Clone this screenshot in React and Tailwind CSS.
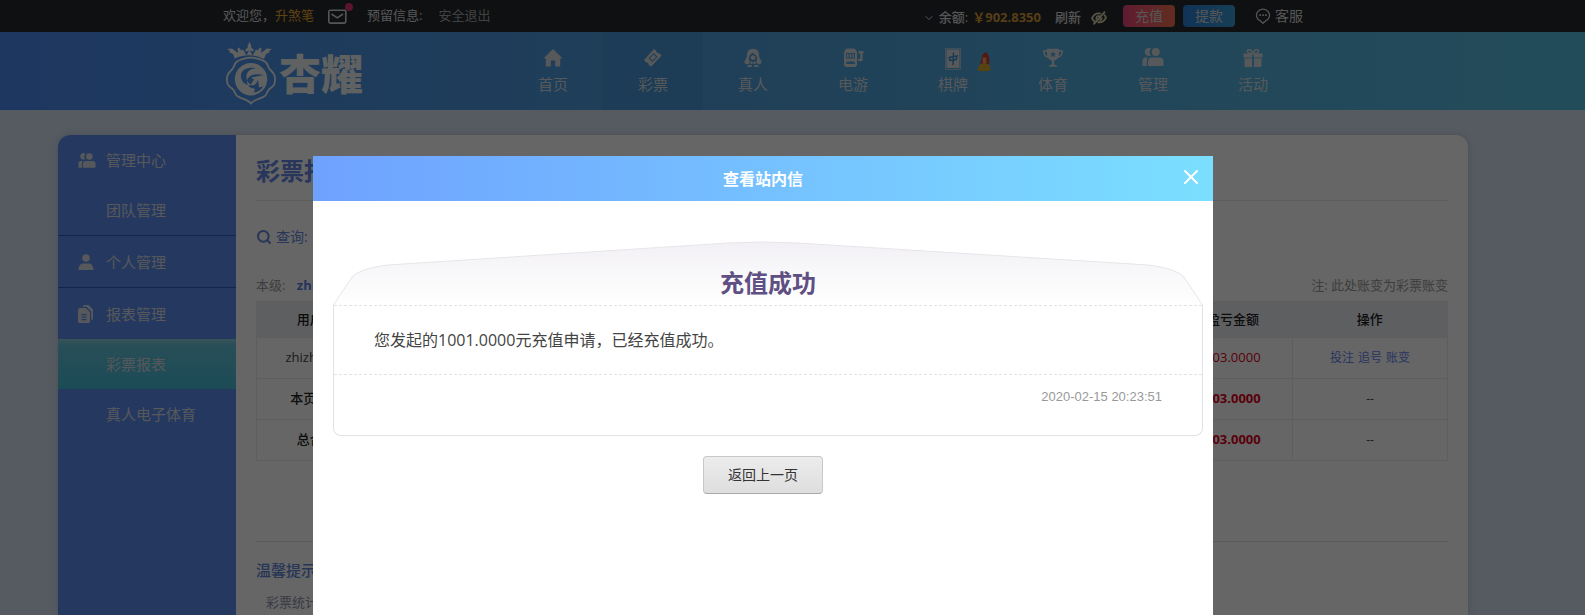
import React, { useState } from "react";
import { ChevronDown, Search, X } from "lucide-react";

const HomeIcon = () => (
  <svg viewBox="0 0 20 20" className="h-5 w-5" fill="currentColor">
    <path d="M10 1 .4 10.400h2.400V18.500h5v-6h4.400v6h5v-8.100h2.400z" />
  </svg>
);

const TicketIcon = () => (
  <svg viewBox="0 0 20 20" className="h-5 w-5" fill="currentColor">
    <path
      fillRule="evenodd"
      d="m11 1 2.500 2c-.5 1.200.8 2.400 2 1.700L18.600 7.500 8 18.800l-2.600-2.200c.6-1.300-.8-2.500-2-1.900L1 12zM10.600 5l-5 5.400 3.900 3.700 5-5.400z"
    />
    <path d="m10.500 6.500 2.600 2.400-3.700 3.700L7 10.200z" />
  </svg>
);

const DealerIcon = () => (
  <svg viewBox="0 0 20 20" className="h-5 w-5" fill="currentColor">
    <path
      fillRule="evenodd"
      d="M10 .8C6 .8 4 3.600 4 7c0 2.600-1.200 4.200-2.400 6-.5 1 .2 2.700 1.700 3.200 1.500.3 3-.4 3.400-1.700C7 13.400 5.800 12 5.900 9.500 6 7 8 6.500 9.500 4.500c1 2 4.500 2.500 4.600 5 .1 2.500-1.100 3.900-.8 5 .4 1.300 1.900 2 3.400 1.700 1.500-.5 2.200-2.200 1.700-3.200C17.200 11.200 16 9.600 16 7c0-3.400-2-6.200-6-6.200z"
    />
    <path d="M7.500 8.500C8.800 8.200 9.400 7.600 10 7c.6.6 1.200 1.200 2.500 1.500 0 2-1 3.500-2.500 3.500s-2.500-1.500-2.500-3.500zM7.500 13 10 14.500l2.500-1.500v3.500L10 15.300l-2.500 1.200zM4.500 17.300l4-.3.700 2H4.200zM15.500 17.300l-4-.3-.7 2h5z" />
  </svg>
);

const SlotIcon = () => (
  <svg viewBox="0 0 22 20" className="h-5 w-[22px]" fill="currentColor">
    <path
      fillRule="evenodd"
      d="M3.500 1.500 5 .5h7l1.500 1L15 4v13l-1.500 2h-10L2 17V4zM4 5v5.500h9V5zm1 8.500-1.200 2.500h9.400L12 13.500z"
    />
    <path d="M5 6h1.500v3.500H5zM7.700 6h1.600v3.500H7.700zM10.500 6H12v3.500h-1.500zM16 11h2.300V5.500h-1.800V3H21.500v2.500h-1V13H16z" />
  </svg>
);

const TrophyIcon = () => (
  <svg viewBox="0 0 20 20" className="h-5 w-5" fill="currentColor">
    <path
      fillRule="evenodd"
      d="M4 .8h12v1.500h4c0 4-1.500 7-5 7.500-1 1.600-2.300 2.600-4 3V16.500c1.500.2 3 .8 3.300 2.200H5.700C6 17.300 7.500 16.700 9 16.500v-3.700c-1.700-.4-3-1.400-4-3-3.500-.5-5-3.500-5-7.500h4zM1.600 3.800c.2 2 .9 3.700 2.600 4.300L4 3.800zM16 3.800l-.2 4.300c1.700-.6 2.400-2.300 2.600-4.300zM10 3.300l-.9 1.900-2.100.3 1.500 1.400-.4 2.100 1.900-1 1.900 1-.4-2.100L13 5.500l-2.100-.3z"
    />
  </svg>
);

const TeamIcon = ({ className }) => (
  <svg viewBox="0 0 22 18" className={className} fill="currentColor">
    <path d="M7.500 0a4 4 0 0 1 1.600.4 5.500 5.500 0 0 0-.3 7A4 4 0 1 1 7.500 0z" />
    <circle cx="13.800" cy="4" r="4" />
    <path d="M3.500 9.500h2.300A6 6 0 0 0 4.800 13v5H.5v-5a3.300 3.300 0 0 1 3-3.500z" />
    <path d="M10 9.500h7.500a4 4 0 0 1 4 4V17a1 1 0 0 1-1 1H7a1 1 0 0 1-1-1v-3.500a4 4 0 0 1 4-4z" />
  </svg>
);

const GiftIcon = () => (
  <svg viewBox="0 0 20 20" className="h-5 w-5" fill="currentColor">
    <path d="M.5 5.500h8.500v4H.5zM11 5.500h8.500v4H11zM1.500 10.300H9V19H1.500zM11 10.300h7.500V19H11z" />
    <path
      fill="none"
      stroke="currentColor"
      strokeWidth="1.500"
      d="M9.500 5.500C8 5.500 4.500 5 4.500 3.200c0-2.500 4.300-2.200 5.500 2.300 1.200-4.500 5.500-4.800 5.500-2.300C15.500 5 12 5.500 10.500 5.500"
    />
  </svg>
);

const TileIcon = () => (
  <svg viewBox="0 0 16 22" className="h-[22px] w-4" fill="none" stroke="currentColor">
    <rect x="0.500" y="0.500" width="15" height="21" strokeWidth="0.600" />
    <rect x="1.500" y="1.500" width="13" height="18.500" fill="currentColor" stroke="none" />
    <path stroke="#3f8fd0" strokeWidth="1.500" d="M4.200 9.500 12 8l-.8 3.500-6.400 1zM8.500 4.500 8 17" />
  </svg>
);

const PersonIcon = () => (
  <svg viewBox="0 0 16 16" className="h-4 w-4" fill="currentColor">
    <circle cx="8" cy="4" r="3.800" />
    <path d="M.5 16c0-4.500 2.500-6.500 4.500-6.500h6c2 0 4.500 2 4.500 6.500z" />
  </svg>
);

const ReportIcon = () => (
  <svg viewBox="0 0 16 18" className="h-[18px] w-4" fill="currentColor">
    <path
      fillRule="evenodd"
      d="M2 3h5.500L12 7v9.500a1.500 1.500 0 0 1-1.500 1.500h-9A1.500 1.500 0 0 1 0 16.500V5a2 2 0 0 1 2-2zm1.500 6v1.200h5V9zm0 2.500v1.200h5v-1.200zm0 2.500v1.200h5V14z"
    />
    <path d="M4.500 1.800C5 .6 5.600 0 7 0h3.500L15 4.500V13c0 1.200-.6 1.900-1.800 2.200V6.500L8.500 1.800z" />
  </svg>
);

const MailIcon = () => (
  <svg viewBox="0 0 19 15" className="h-[15px] w-[19px]" fill="none" stroke="currentColor" strokeWidth="1.600">
    <rect x="0.800" y="1.300" width="17" height="12.800" rx="1.500" />
    <path d="m3.500 5 5.800 3.800L15 5" />
  </svg>
);

const HideIcon = () => (
  <svg viewBox="0 0 16 14" className="h-3.5 w-4" fill="none" stroke="currentColor" strokeWidth="1.800">
    <path d="M10 2.600C5.500 1.600 2.500 4 1 7.200c.6 1.500 1.600 2.700 2.800 3.400M13 3.800c1 .8 1.700 1.800 2 2.900-1.500 3.300-4.500 5.200-8.500 4.300M5.500 8.500c-.6-2 .8-3.600 3-3.600M14 .6 2.500 13.400M10.600 6.500c.2 1.500-.7 2.500-2.200 2.700" />
  </svg>
);

const ChatIcon = () => (
  <svg viewBox="0 0 16 16" className="h-4 w-4" fill="none" stroke="currentColor" strokeWidth="1.300">
    <path d="M5.800 13.200a6.500 6.200 0 1 1 4.400 0L8 15.200z" />
    <path strokeWidth="1.800" d="M4.300 7.200h1.600M7.200 7.200h1.600M10.100 7.200h1.600" />
  </svg>
);

const Emblem = () => (
  <svg viewBox="0 0 52 66" className="h-[66px] w-[52px]" fill="currentColor">
    <path d="M10 20 8 15l-4-2 1-1-3-2 5-.5 6 4.500-.5-4.500 2-1 1.500 3 2-1 3.500 6 2.500-5-3 1c-1.500-1.500 0-3.500 2-3.500-1.500-2 .5-3 1.500-6.500 1 3.500 3 4.500 1.500 6.500 2 0 3.500 2 2 3.500l-3-1 2.500 5 3.500-6 2 1 1.500-3 2 1-.5 4.500 6-4.500 5 .5-3 2 1 1-4 2-2 5c-9-5-21-5-30 0z" />
    <path
      fill="none"
      stroke="currentColor"
      strokeWidth="1.800"
      d="M26 64.500c-4-5-9-4-13-7-4-2-2-5-6-8-5-3-5-6-5-9s0-5 4-9c4-3 2-6 6-9 9-5 19-5 28 0 4 3 2 6 6 9 4 4 4 6 4 9s0 6-5 9c-4 3-2 6-6 8-4 3-9 2-13 7z"
    />
    <path
      fillRule="evenodd"
      d="M26 24a16.200 16.200 0 1 0 .1 32.400A16.200 16.200 0 0 0 26 24zm9 5.500c-7-1-11 1-13 5-2 6 1 10 6 12-8 1-13-5-12-11 1-5 7-8 19-6zm4 6.500-13 2.500 3 2-4 6c5 1 7-3 8-6l1 8 4-1c-2 4-6 6-10 6 3-3 2-4-1-4.500-4-1-6-5-4.500-9 2-4 8-6 16.500-4z"
    />
  </svg>
);

const navItems = [
  { label: "首页", icon: <HomeIcon /> },
  { label: "彩票", icon: <TicketIcon />, active: true },
  { label: "真人", icon: <DealerIcon /> },
  { label: "电游", icon: <SlotIcon /> },
  { label: "棋牌", icon: <TileIcon />, hot: true },
  { label: "体育", icon: <TrophyIcon /> },
  { label: "管理", icon: <TeamIcon className="h-[18px] w-[22px]" /> },
  { label: "活动", icon: <GiftIcon /> },
];

const menuGroups = [
  { label: "管理中心", icon: <TeamIcon className="h-[15px] w-[18px]" />, children: ["团队管理"] },
  { label: "个人管理", icon: <PersonIcon />, children: [] },
  { label: "报表管理", icon: <ReportIcon />, children: ["彩票报表", "真人电子体育"] },
];

const rows = [
  { name: "zhizhong8", profit: "903.0000", links: ["投注", "追号", "账变"] },
  { name: "本页合计", profit: "903.0000", total: true },
  { name: "总合计", profit: "903.0000", total: true },
];

const TopBar = () => (
  <div className="h-8 bg-[#26282f] pr-[59px] text-[13px] text-[#d8d8d8]">
    <div className="mx-auto flex h-full max-w-[1080px] items-center justify-between">
      <div className="flex items-center">
        <span>欢迎您，</span>
        <span className="text-[#e8aa30]">升煞笔</span>
        <a href="#mail" aria-label="站内信" className="relative ml-3.5">
          <MailIcon />
          <i className="absolute -top-1.5 -right-1.5 h-2 w-2 rounded-full bg-[#e0356f]"></i>
        </a>
        <span className="ml-5">预留信息:</span>
        <a href="#logout" className="ml-4 text-[#a5a5a5]">安全退出</a>
      </div>
      <div className="flex items-center">
        <div className="flex items-center pt-1">
          <ChevronDown className="mr-1 h-3 w-3" />
          <span className="font-medium">余额:</span>
          <span className="ml-1 font-bold text-[#d89c38]">￥902.8350</span>
          <button className="ml-3.5 font-medium">刷新</button>
          <button aria-label="隐藏余额" className="ml-2.5 text-[#d8d2a8]">
            <HideIcon />
          </button>
        </div>
        <button className="ml-4 h-[22px] w-[52px] rounded bg-linear-to-r from-[#f04478] to-[#f07050] text-sm leading-5">
          充值
        </button>
        <button className="ml-2 h-[22px] w-[52px] rounded bg-linear-to-r from-[#2b7fd8] to-[#3a9cd8] text-sm leading-5">
          提款
        </button>
        <a href="#service" className="ml-5 flex items-center gap-1 text-sm">
          <ChatIcon />
          客服
        </a>
      </div>
    </div>
  </div>
);

const NavBar = () => (
  <header className="h-[78px] bg-linear-to-r from-[#4b8af0] via-[#4fa0dc] via-45% to-[#59bfe2] pr-[59px]">
    <div className="mx-auto flex h-full max-w-[1080px] justify-between">
      <a href="#home" className="flex items-center gap-0.5 pt-0.5 pl-0.5 text-[#f0f4f4]">
        <Emblem />
        <span className="pt-1 text-[42px] leading-none font-black">杏耀</span>
      </a>
      <nav className="flex">
        {navItems.map((item) => (
          <a
            key={item.label}
            href="#nav"
            className={`flex w-25 flex-col items-center pt-4 text-[15px] leading-6 text-[#d8dde2] ${
              item.active ? "bg-[#2a5fb0]/10" : ""
            }`}
          >
            <span className="relative flex h-6 items-start justify-center">
              {item.icon}
              {item.hot && (
                <svg viewBox="0 0 16 22" className="absolute top-1 left-8 h-5 w-[15px]">
                  <path fill="#d03c28" d="M9 0c4 2 5 8 4 15H4C3 9 5 9 5 6c0-3 2-3 4-6z" />
                  <path fill="#e0a070" d="M6 6h4v7H6z" />
                  <path fill="#d8a830" d="M4 13h8c2 2 3 4 2 8H1c-1-4 1-6 3-8z" />
                </svg>
              )}
            </span>
            {item.label}
          </a>
        ))}
      </nav>
    </div>
  </header>
);

const SideMenu = () => (
  <aside className="w-[178px] shrink-0 rounded-tl-xl bg-[#5c8eef] text-[15px] text-[#d8dce4]">
    {menuGroups.map((group, index) => (
      <div key={group.label} className={index > 0 ? "border-t border-[#3560b8] pt-px" : ""}>
        <a href="#group" className="flex h-[50px] items-center pl-5">
          <span className="flex w-7 items-center">{group.icon}</span>
          {group.label}
        </a>
        {group.children.map((child) => (
          <a
            key={child}
            href="#report"
            className={`flex h-[50px] items-center pl-12 ${
              child === "彩票报表"
                ? "bg-linear-to-b from-[#66c4dc] to-[#46bcd8] shadow-[inset_0_6px_6px_-4px_#a0d0e0]"
                : ""
            }`}
          >
            {child}
          </a>
        ))}
      </div>
    ))}
  </aside>
);

const Report = () => (
  <section className="min-w-0 flex-1 px-5 text-[13px]">
    <h1 className="h-[66px] border-b border-[#e6e6e6] pt-4 text-2xl leading-10 font-bold text-[#6487e6]">
      彩票报表
    </h1>
    <div className="flex items-center gap-1 pt-6 text-sm leading-6 text-[#6487dc]">
      <Search className="h-4 w-4" strokeWidth={3} />
      查询:
    </div>
    <div className="flex justify-between pt-6 leading-6 text-[#9a9a9a]">
      <span>
        本级: <a href="#self" className="ml-2 font-bold text-[#5b7fe8]">zhizhong8</a>
      </span>
      <span>注: 此处账变为彩票账变</span>
    </div>
    <table className="mt-1 w-full table-fixed border-collapse border border-[#ebebeb] text-center">
      <thead>
        <tr className="h-9 bg-[#ebedf3] text-[#222]">
          <th className="w-[10%] font-medium">用户名</th>
          <th></th>
          <th></th>
          <th></th>
          <th></th>
          <th className="w-[10%] font-medium">盈亏金额</th>
          <th className="w-[13%] font-medium">操作</th>
        </tr>
      </thead>
      <tbody>
        {rows.map((row) => (
          <tr
            key={row.name}
            className={`h-[41px] border border-[#ebebeb] text-[#444] ${row.total ? "font-bold" : ""}`}
          >
            <td className={row.total ? "font-medium text-[#222]" : ""}>{row.name}</td>
            <td></td>
            <td></td>
            <td></td>
            <td></td>
            <td className="text-[#e00020]">{row.profit}</td>
            <td className="border-l border-[#ebebeb] text-xs font-normal">
              {row.links ? (
                <span className="space-x-1 text-[#6487ef]">
                  {row.links.map((link) => (
                    <a key={link} href="#detail">{link}</a>
                  ))}
                </span>
              ) : (
                "--"
              )}
            </td>
          </tr>
        ))}
      </tbody>
    </table>
    <div className="mt-20 border-t border-[#e2e2e2] pt-4 leading-6">
      <h2 className="text-[15px] font-medium text-[#5f88d8]">温馨提示</h2>
      <p className="pt-2 pl-2.5 text-[#8a8fa8]">彩票统计</p>
    </div>
  </section>
);

const MessageModal = ({ onClose }) => (
  <div className="fixed inset-0 flex justify-center bg-black/60 pt-[156px] pr-[59px]">
    <div role="dialog" aria-labelledby="message-title" className="w-full max-w-[900px] bg-white">
      <div className="flex h-[45px] items-center bg-linear-to-r from-[#6fa1ff] to-[#7bdfff] px-2.5 text-white">
        <h2 id="message-title" className="flex-1 pl-6 text-center text-base font-bold">
          查看站内信
        </h2>
        <button aria-label="关闭" onClick={onClose} className="pb-1">
          <X className="h-6 w-6" />
        </button>
      </div>
      <article className="pt-10 pr-2.5 pl-5">
        <div className="relative h-16">
          <svg viewBox="0 0 870 64" preserveAspectRatio="none" className="absolute inset-0 h-full w-full">
            <defs>
              <linearGradient id="flap" x1="0" y1="0" x2="0" y2="1">
                <stop offset="0" stopColor="#f2f0f4" />
                <stop offset="1" stopColor="#ffffff" />
              </linearGradient>
            </defs>
            <path
              d="M.5 64 19 36Q28 27 55 24L395 2Q430 0 465 2L815 24Q842 27 851 36L869.500 64"
              fill="url(#flap)"
              stroke="#e6e6ea"
            />
          </svg>
          <h3 className="relative pt-6 text-center text-2xl leading-9 font-bold text-[#5f4f82]">
            充值成功
          </h3>
        </div>
        <div className="rounded-b-lg border-x border-b border-[#dfe3e8]">
          <p className="border-y border-dashed border-[#e2e2e2] px-10 py-[22px] text-base leading-6 text-[#444]">
            您发起的1001.0000元充值申请，已经充值成功。
          </p>
          <div className="h-15 px-10 pt-3 text-right font-['Liberation_Sans',sans-serif] text-[13px] leading-5 text-[#999]">
            2020-02-15 20:23:51
          </div>
        </div>
      </article>
      <button
        onClick={onClose}
        className="mx-auto mt-5 block h-[38px] w-[120px] rounded border border-[#c8c8c8] border-b-[#aaa] bg-linear-to-b from-[#ececec] to-[#dedede] text-sm text-[#333]"
      >
        返回上一页
      </button>
    </div>
  </div>
);

const App = () => {
  const [open, setOpen] = useState(true);

  return (
    <div
      lang="zh-CN"
      className="flex h-screen flex-col overflow-hidden bg-[#d6e2f2] font-['Open_Sans','Noto_Sans_CJK_SC',sans-serif]"
    >
      <TopBar />
      <NavBar />
      <main className="flex-1 pt-[25px] pr-[59px]">
        <div className="mx-auto flex h-full max-w-[1410px] rounded-t-xl bg-white shadow-[0_0_6px_#b8c4d4]">
          <SideMenu />
          <Report />
        </div>
      </main>
      {open && <MessageModal onClose={() => setOpen(false)} />}
    </div>
  );
};

export default App;
